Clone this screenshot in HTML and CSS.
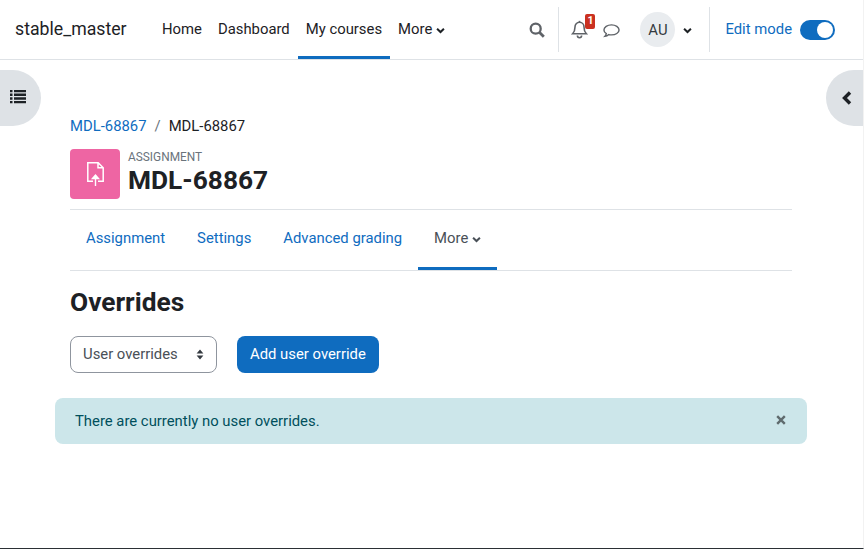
FILE: index.html
```html
<!DOCTYPE html>
<html lang="en">
<head>
<meta charset="utf-8">
<title>Overrides</title>
<link rel="stylesheet" href="styles.css">
</head>
<body>
<div class="frame">
<header class="navbar">
  <a class="brand">stable_master</a>
  <nav class="primary">
    <a class="pnav">Home</a>
    <a class="pnav">Dashboard</a>
    <a class="pnav active">My courses</a>
    <a class="pnav">More<svg class="chev" viewBox="0 0 10 7"><path d="M1.200 1.500 5 5.200 8.800 1.500" fill="none" stroke="currentColor" stroke-width="2.200"/></svg></a>
  </nav>
  <div class="nav-right">
    <svg class="ico search" viewBox="0 0 16 16"><circle cx="6.700" cy="6.700" r="5" fill="none" stroke="#5f6368" stroke-width="2.300"/><path d="M10.300 10.300 14.800 14.800" stroke="#5f6368" stroke-width="2.800"/></svg>
    <span class="sep sep-a"></span>
    <span class="bell">
      <svg class="ico" viewBox="0 0 16 18"><path d="M8 2.200c-2.600 0-4.300 2-4.300 4.600 0 3.600-.9 4.900-2.200 6.200h13c-1.300-1.300-2.200-2.600-2.200-6.200C12.300 4.200 10.600 2.200 8 2.200Z" fill="none" stroke="#5f6368" stroke-width="1.500"/><path d="M6 14.800a2 2 0 0 0 4 0" fill="none" stroke="#5f6368" stroke-width="1.500"/><path d="M8 .8v1.400" stroke="#5f6368" stroke-width="1.500"/></svg>
      <span class="badge">1</span>
    </span>
    <svg class="ico chat" viewBox="0 0 18 16"><path d="M9 1.500C4.600 1.500 1 3.900 1 6.900c0 1.600.9 3 2.500 3.900-.2 1.100-.8 2.100-1.600 2.900 1.600-.1 3.200-.9 4.200-1.900.9.200 1.900.3 2.900.3 4.400 0 8-2.200 8-5.200C17 3.900 13.400 1.500 9 1.500Z" fill="none" stroke="#5f6368" stroke-width="1.500"/></svg>
    <span class="avatar">AU</span>
    <svg class="chev user-chev" viewBox="0 0 10 7"><path d="M1.200 1.500 5 5.200 8.800 1.500" fill="none" stroke="currentColor" stroke-width="2.200"/></svg>
    <span class="sep sep-b"></span>
    <a class="edit">Edit mode</a>
    <span class="toggle"><span class="knob"></span></span>
  </div>
</header>

<button class="drawer-tab left" aria-label="Open course index">
  <svg viewBox="0 0 16 14" class="tab-ico"><path d="M0 1.500h2.500M4 1.500h12M0 5.200h2.500M4 5.200h12M0 8.900h2.500M4 8.900h12M0 12.500h2.500M4 12.500h12" stroke="#1d2125" stroke-width="2.400" transform="translate(0 -.4)"/></svg>
</button>
<button class="drawer-tab right" aria-label="Open block drawer">
  <svg viewBox="0 0 10 14" class="tab-chev"><path d="M8 1.500 2.500 7 8 12.500" fill="none" stroke="#1d2125" stroke-width="3.400"/></svg>
</button>

<main class="page">
  <div class="inner">
    <ol class="crumbs">
      <li><a class="link">MDL-68867</a></li>
      <li class="slash">/</li>
      <li>MDL-68867</li>
    </ol>
    <div class="head">
      <span class="modicon">
        <svg viewBox="0 0 17 24" class="modsvg"><path d="M6 19.300H.8V.8h10.400l5 5v13.500H11M11 .8v5h5.200" fill="none" stroke="#fff" stroke-width="1.500"/><path d="M8.500 24v-9.500M5.500 16.500l3-3.500 3 3.500Z" fill="#fff" stroke="#fff" stroke-width="1.400"/></svg>
      </span>
      <div class="titles">
        <div class="kicker">ASSIGNMENT</div>
        <h1 class="title">MDL-68867</h1>
      </div>
    </div>
    <nav class="tabs">
      <a class="tab">Assignment</a>
      <a class="tab">Settings</a>
      <a class="tab">Advanced grading</a>
      <a class="tab current">More<svg class="chev" viewBox="0 0 10 7"><path d="M1.200 1.500 5 5.200 8.800 1.500" fill="none" stroke="currentColor" stroke-width="2.200"/></svg></a>
    </nav>
    <h2 class="heading">Overrides</h2>
    <div class="controls">
      <div class="select">User overrides
        <svg class="updown" viewBox="0 0 8 12"><path d="M4 .5 7.700 4.800H.3ZM4 11.500.3 7.200h7.400Z" fill="#343a40"/></svg>
      </div>
      <a class="btn">Add user override</a>
    </div>
  </div>
  <div class="alert">
    <span>There are currently no user overrides.</span>
    <svg class="close" viewBox="0 0 10 10"><path d="M1.200 1.200 8.800 8.800M8.800 1.200 1.200 8.800" stroke="#5f6b6e" stroke-width="2.400"/></svg>
  </div>
</main>
</div>
</body>
</html>
```
FILE: styles.css
```css
* { box-sizing: border-box; }
html, body { margin: 0; padding: 0; height: 100%; }
body { background: #fff; color: #1d2125; font-family: Roboto, "Liberation Sans", sans-serif; font-size: 14.85px; line-height: 22.5px; overflow: hidden; }
a { text-decoration: none; color: inherit; }
.frame { position: relative; width: 864px; height: 549px; border-bottom: 1px solid #2b3035; border-right: 1px solid #f2f2f2; overflow: hidden; }

.navbar { height: 60px; display: flex; align-items: stretch; border-bottom: 1px solid #dee2e6; padding-left: 15px; }
.brand { font-size: 17.7px; align-self: center; margin-top: -1px; width: 139px; }
.primary { display: flex; }
.pnav { display: flex; align-items: center; padding: 0 8px; border-bottom: 3px solid transparent; margin-bottom: -1px; height: 59px; padding-top: 2px; }
.pnav.active { border-bottom-color: #0f6cbf; }
.chev { width: 9px; height: 7px; margin-left: 4px; margin-top: 2px; }

.nav-right { margin-left: auto; display: flex; align-items: center; position: relative; padding-right: 28px; }
.ico { display: block; }
.search { width: 16px; height: 16px; margin-right: 13px; }
.sep { width: 1px; height: 45px; background: #dee2e6; }
.sep-a { margin-right: 12px; }
.bell { position: relative; display: block; width: 18px; height: 18px; margin-right: 14px; }
.bell .ico { width: 17px; height: 19px; margin-top: -1px; }
.badge { position: absolute; left: 14px; top: -7px; width: 10px; height: 15px; background: #ca3120; color: #fff; font-size: 10.5px; font-weight: 700; line-height: 14px; text-align: center; border-radius: 2px; }
.chat { width: 17px; height: 16px; margin: 2px 20px 0 0; }
.avatar { width: 35px; height: 35px; border-radius: 50%; background: #e9ecef; display: flex; align-items: center; justify-content: center; padding-top: 1px; font-size: 14.85px; color: #343a40; margin-right: 8px; }
.user-chev { margin: 2px 17px 0 0; }
.sep-b { margin-right: 15px; }
.edit { color: #0f6cbf; margin-right: 8px; }
.toggle { width: 35px; height: 20px; border-radius: 10px; background: #0f6cbf; display: flex; align-items: center; justify-content: flex-end; padding-right: 2px; }
.knob { width: 16px; height: 16px; border-radius: 50%; background: #fff; }

.drawer-tab { position: absolute; top: 70px; height: 56px; border: 0; padding: 0; background: #dee2e6; display: flex; align-items: center; }
.drawer-tab.left { left: 0; width: 41px; border-radius: 0 28px 28px 0; padding-left: 10px; }
.drawer-tab.right { left: 826px; width: 38px; border-radius: 28px 0 0 28px; padding-left: 16px; }
.tab-ico { width: 16px; height: 14px; margin-top: -2px; }
.tab-chev { width: 10px; height: 14px; }

.page { padding: 54px 0 0 55px; width: 752px; box-sizing: content-box; }
.inner { padding: 0 0 0 15px; width: 737px; }
.crumbs { list-style: none; margin: 0; padding: 1px 0 0; display: flex; height: 23px; }
.link { color: #0f6cbf; }
.slash { color: #6a737b; padding: 0 8px; }
.head { display: flex; margin-top: 12px; height: 61px; border-bottom: 1px solid #dee2e6; }
.modicon { width: 50px; height: 50px; border-radius: 4px; background: #ee65a3; display: flex; align-items: center; justify-content: center; margin-right: 8px; }
.modsvg { width: 17px; height: 24px; }
.titles { margin-top: -1px; }
.kicker { font-size: 11.88px; line-height: 18px; color: #6a737b; }
.title { margin: 0; font-size: 26.3px; font-weight: 700; line-height: 28px; }

.tabs { display: flex; height: 61px; border-bottom: 1px solid #dee2e6; }
.tab { color: #0f6cbf; padding: 0 16px; display: flex; align-items: center; height: 60px; border-bottom: 3px solid transparent; }
.tab.current { color: #495057; border-bottom-color: #0f6cbf; }
.heading { margin: 16px 0 0; font-size: 26.3px; font-weight: 700; line-height: 30px; }
.controls { display: flex; margin-top: 19px; gap: 20px; }
.select { width: 147px; height: 37px; border: 1px solid #8f959e; border-radius: 8px; padding: 0 12px; display: flex; align-items: center; justify-content: space-between; color: #495057; }
.updown { width: 8px; height: 11px; }
.btn { height: 37px; padding: 0 13px; background: #0f6cbf; color: #fff; border-radius: 8px; display: flex; align-items: center; }

.alert { margin-top: 25px; height: 46px; width: 752px; border-radius: 8px; background: #cce6ea; color: #004f5c; display: flex; align-items: center; justify-content: space-between; padding: 0 20px; }
.close { width: 10px; height: 10px; margin-top: -3px; margin-right: 1px; }
```
